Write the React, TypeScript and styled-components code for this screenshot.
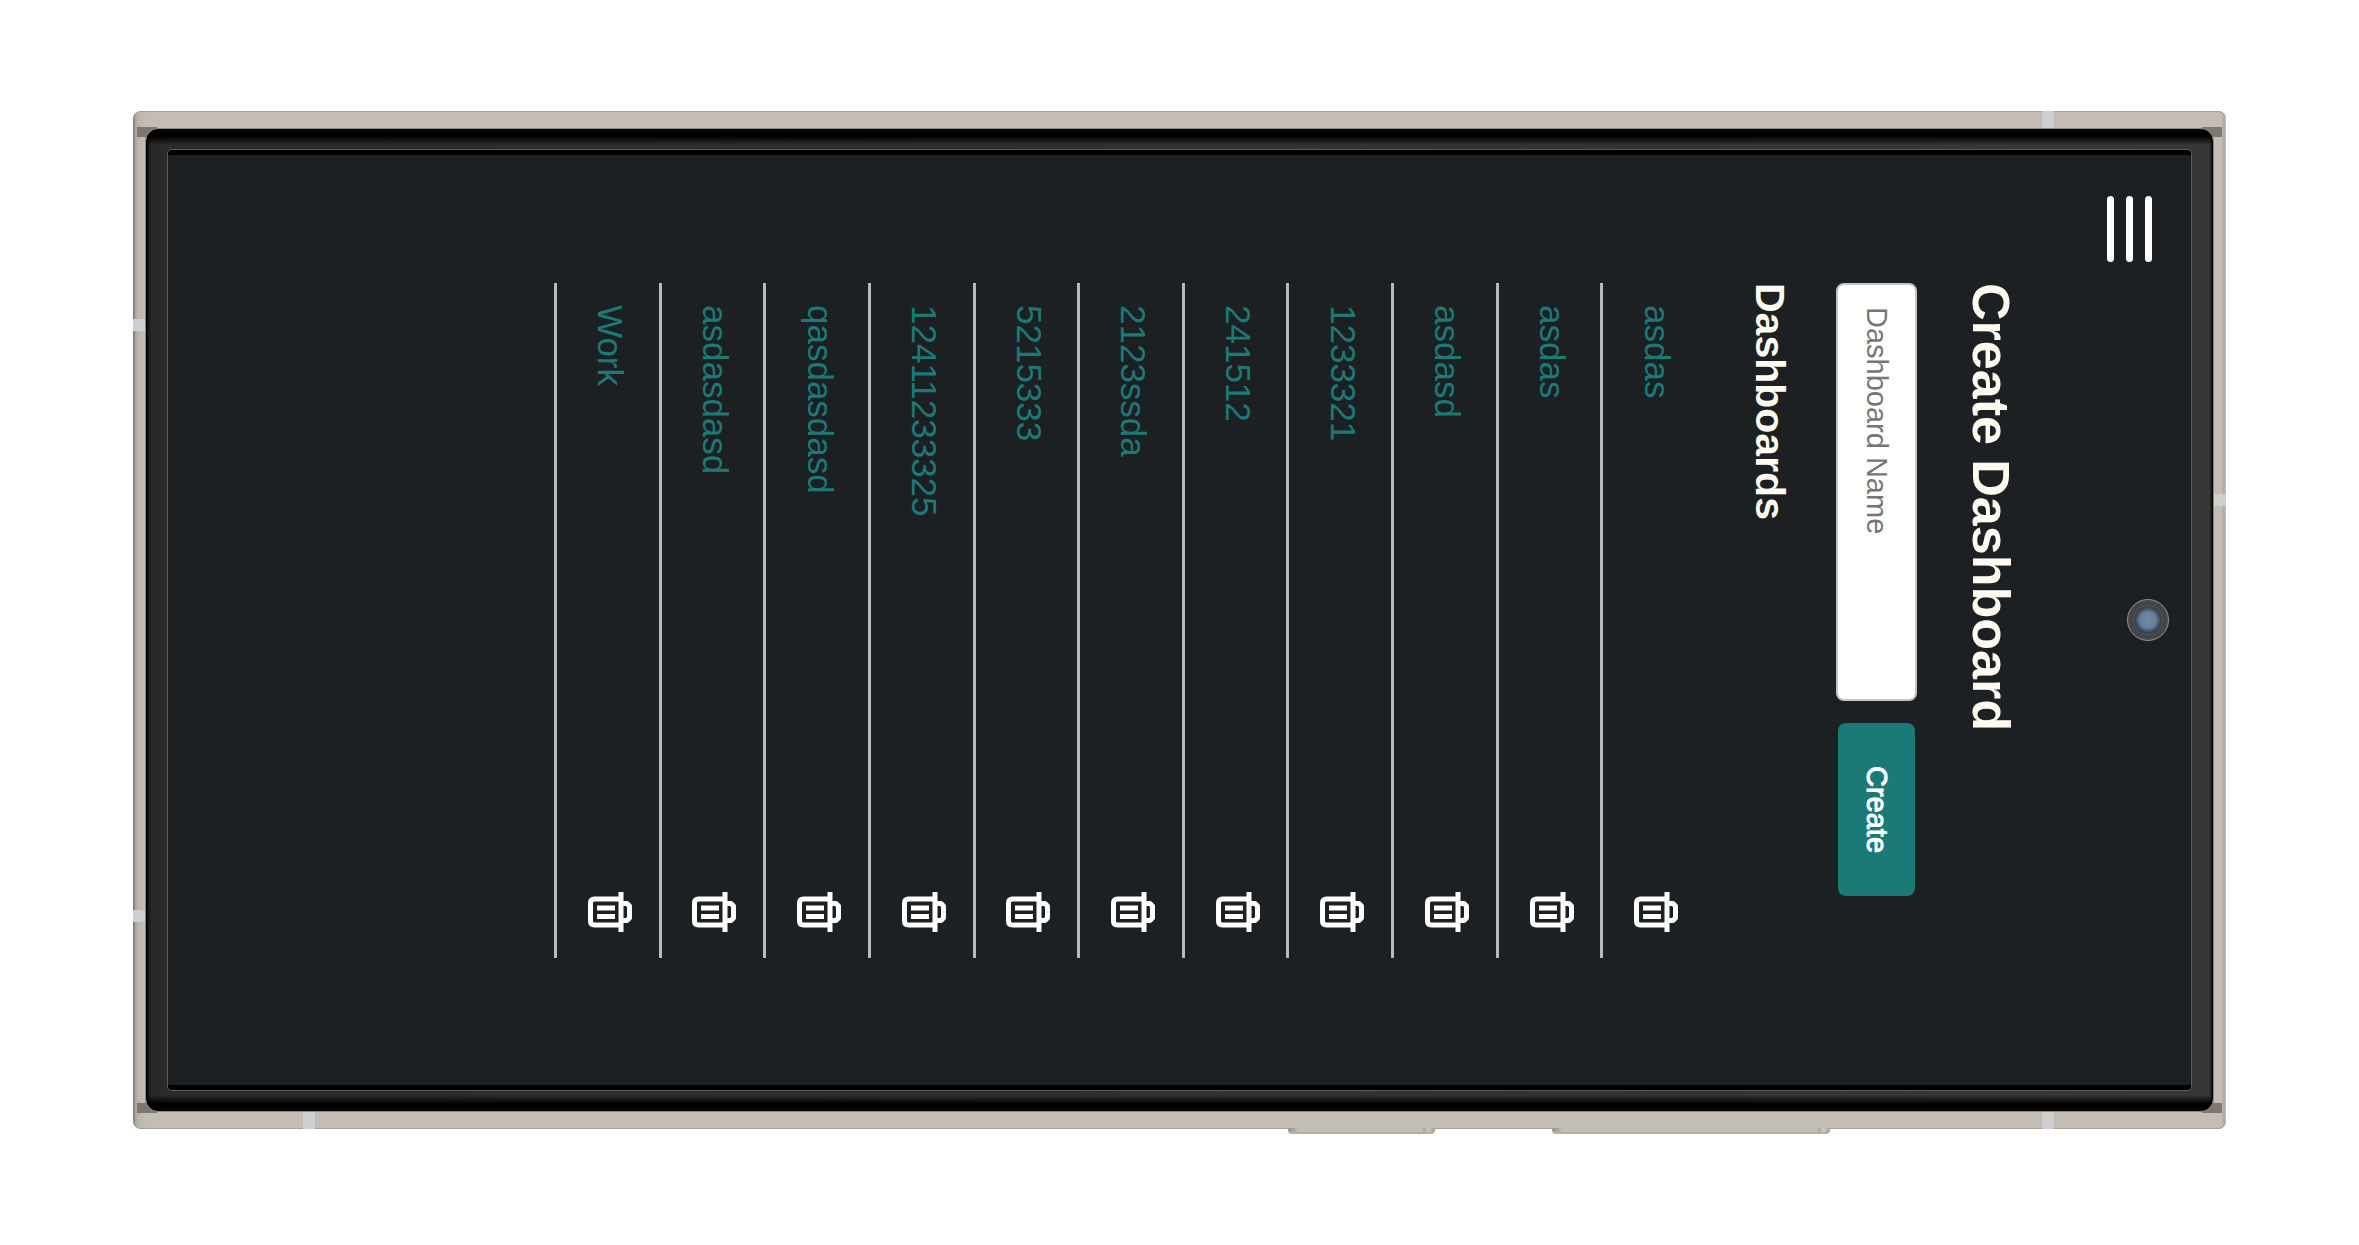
import React from "react";
import styled, { createGlobalStyle } from "styled-components";

const dashboards = [
  "asdas",
  "asdas",
  "asdasd",
  "1233321",
  "241512",
  "2123ssda",
  "5215333",
  "12411233325",
  "qasdasdasd",
  "asdasdasd",
  "Work",
];

const color = {
  screen: "#1c2022",
  accent: "#1b7a77",
  metal: "#c3bdb6",
  line: "#b9b9b9",
  text: "#fffaf0",
};

const GlobalStyle = createGlobalStyle`
  *, *::before, *::after { box-sizing: border-box; }
  body {
    margin: 0;
    background: #ffffff;
    font-family: "Liberation Sans", Arial, Helvetica, sans-serif;
  }
`;

const Page = styled.div`
  padding: 111px 133px;
`;

/* Metal shell of the phone, lying on its side */
const Phone = styled.div`
  position: relative;
  display: flex;
  aspect-ratio: 2093 / 1018;
  padding: 18px 13px;
  border-radius: 8px;
  background: linear-gradient(90deg, #7d7870 0, #7d7870 1px, #a8a199 2px, #bdb6ae 5px, ${color.metal} 13px, ${color.metal} calc(100% - 4px), #aaa59e calc(100% - 2px), #c9c4bd 100%);
  box-shadow: inset 0 1px 0 #a5a199, inset 0 -1px 0 #a5a199;
`;

const Corner = styled.span<{ $x: "left" | "right"; $y: "top" | "bottom" }>`
  position: absolute;
  ${(p) => p.$x}: 4px;
  ${(p) => p.$y}: 16px;
  width: 20px;
  height: 10px;
  background: #7d7770;
`;

const Antenna = styled.span<{ $side: "top" | "right" | "bottom" | "left"; $at: string }>`
  position: absolute;
  background: #cfcfcf;
  ${(p) => p.$side}: 0;
  ${(p) =>
    p.$side === "top" || p.$side === "bottom"
      ? `left: ${p.$at}; width: 12px; height: 17px;`
      : `top: ${p.$at}; height: 12px; width: 13px;`}
`;

const SideKey = styled.span<{ $from: string; $length: string }>`
  position: absolute;
  top: calc(100% - 1px);
  left: ${(p) => p.$from};
  width: ${(p) => p.$length};
  height: 6px;
  border-radius: 0 0 4px 4px;
  border: 1px solid #a39e97;
  border-top-width: 0;
  border-bottom: 2px solid #b3aea7;
  background: linear-gradient(90deg, #99938b 0, ${color.metal} 10px, ${color.metal} calc(100% - 12px), #aca69e calc(100% - 10px), #cdc8c1 calc(100% - 6px), #aca69e 100%);
`;

const Bezel = styled.div`
  position: relative;
  flex: 1;
  display: flex;
  padding: 20px 21px;
  border: 1px solid #000000;
  border-radius: 12px;
  background:
    linear-gradient(180deg, #000000 0, #000000 6px, rgba(0, 0, 0, 0) 15px, rgba(0, 0, 0, 0) calc(100% - 15px), #000000 calc(100% - 6px)),
    linear-gradient(90deg, #0c0c0c 0, #282828 4px, #2b2b2b 22px, #373737 calc(100% - 22px), #373737 calc(100% - 3px), #141414 100%);
  box-shadow: 0 0 0 1px #8b8781;
`;

const Glass = styled.div`
  flex: 1;
  display: flex;
  padding: 5px 0;
  border-radius: 4px;
  background: #000000;
  box-shadow: 0 0 0 1px #5a5b5c;
`;

/* The app runs in sideways text: blocks stack from right to left */
const Screen = styled.div`
  position: relative;
  flex: 1;
  display: flex;
  flex-direction: column;
  writing-mode: vertical-rl;
  text-orientation: sideways;
  background: ${color.screen};
`;

const TopBar = styled.header`
  display: flex;
  padding: 41px 39px 0 0;
`;

const MenuButton = styled.button`
  display: flex;
  flex-direction: column;
  gap: 12px;
  padding: 0;
  border: 0;
  background: transparent;
  writing-mode: inherit;
`;

const Bar = styled.span`
  inline-size: 66px;
  block-size: 7px;
  border-radius: 4px;
  background: #ffffff;
`;

const Camera = styled.span`
  position: absolute;
  top: 50%;
  right: 22px;
  width: 42px;
  height: 42px;
  border: 1px solid #8c8c8c;
  border-radius: 50%;
  transform: translateY(-21px);
  background: radial-gradient(circle, #7089a8 0, #67809c 8px, #3f4b5a 12px, #3c3f45 13px, #49525e 15px, #3f4043 16px, #4b4b4b 20px);
`;

const Content = styled.main`
  flex: 1;
  display: flex;
  flex-direction: column;
  padding: 128px 86px 127px 386px;
`;

const Title = styled.h1`
  margin: 0 0 0 44px;
  font-size: 52px;
  line-height: 60px;
  color: ${color.text};
`;

const Form = styled.form`
  display: flex;
  align-items: center;
  gap: 22px;
  margin-left: 42px;
  padding-bottom: 62px;
`;

const NameInput = styled.input`
  writing-mode: vertical-rl;
  text-orientation: sideways;
  flex: 1;
  min-height: 0;
  width: 81px;
  padding: 22px 0;
  border: 2px solid #c4c4c4;
  border-radius: 8px;
  background: #ffffff;
  color: #222222;
  font: 29px "Liberation Sans", Arial, sans-serif;

  &::placeholder {
    color: #757575;
    opacity: 1;
  }
`;

const CreateButton = styled.button`
  writing-mode: vertical-rl;
  text-orientation: sideways;
  width: 77px;
  padding: 43px 0;
  border: 0;
  border-radius: 8px;
  background: ${color.accent};
  color: #ffffff;
  font: 29px "Liberation Sans", Arial, sans-serif;
  -webkit-text-stroke: 1px #ffffff;
`;

const Heading = styled.h2`
  margin: 0 0 0 41px;
  font-size: 41px;
  line-height: 48px;
  color: ${color.text};
`;

const List = styled.ul`
  flex: 1;
  display: flex;
  flex-direction: column;
  margin: 0;
  padding: 0;
  list-style: none;
`;

const Row = styled.li`
  flex: 1;
  display: flex;
  align-items: center;
  justify-content: space-between;
  padding: 22px 0 26px 5px;
  border-left: 3px solid ${color.line};
`;

const RowLink = styled.a`
  font-size: 35px;
  line-height: 40px;
  color: ${color.accent};
  text-decoration: none;
`;

const DeleteButton = styled.button`
  display: flex;
  padding: 0;
  border: 0;
  background: transparent;
`;

const TrashIcon = () => (
  <svg width="45" height="40" viewBox="0 0 45 40" fill="none" stroke="#ffffff" strokeWidth="5">
    <path d="M33 7H6.500Q2.500 7 2.500 11V29Q2.500 33 6.500 33H33" />
    <path d="M33 0V40" />
    <path d="M33 11.500H39L41.500 14V26L39 28.500H33" strokeLinejoin="round" />
    <path d="M9 16H27M9 24.500H27" />
  </svg>
);

export default function App() {
  return (
    <>
      <GlobalStyle />
      <Page>
        <Phone>
          <Corner $x="left" $y="top" />
          <Corner $x="right" $y="top" />
          <Corner $x="left" $y="bottom" />
          <Corner $x="right" $y="bottom" />
          <Antenna $side="top" $at="91.2%" />
          <Antenna $side="bottom" $at="91.2%" />
          <Antenna $side="bottom" $at="8.1%" />
          <Antenna $side="left" $at="20.4%" />
          <Antenna $side="left" $at="78.5%" />
          <Antenna $side="right" $at="37.6%" />
          <SideKey $from="55.2%" $length="7%" />
          <SideKey $from="67.8%" $length="13.3%" />
          <Bezel>
            <Glass>
              <Screen>
                <TopBar>
                  <MenuButton type="button" aria-label="Menu">
                    <Bar />
                    <Bar />
                    <Bar />
                  </MenuButton>
                </TopBar>
                <Content>
                  <Title>Create Dashboard</Title>
                  <Form onSubmit={(e) => e.preventDefault()}>
                    <NameInput aria-label="Dashboard Name" placeholder="Dashboard Name" />
                    <CreateButton type="submit">Create</CreateButton>
                  </Form>
                  <Heading>Dashboards</Heading>
                  <List>
                    {dashboards.map((name, i) => (
                      <Row key={i}>
                        <RowLink href="#">{name}</RowLink>
                        <DeleteButton type="button" aria-label={`Delete ${name}`}>
                          <TrashIcon />
                        </DeleteButton>
                      </Row>
                    ))}
                  </List>
                </Content>
                <Camera />
              </Screen>
            </Glass>
          </Bezel>
        </Phone>
      </Page>
    </>
  );
}
